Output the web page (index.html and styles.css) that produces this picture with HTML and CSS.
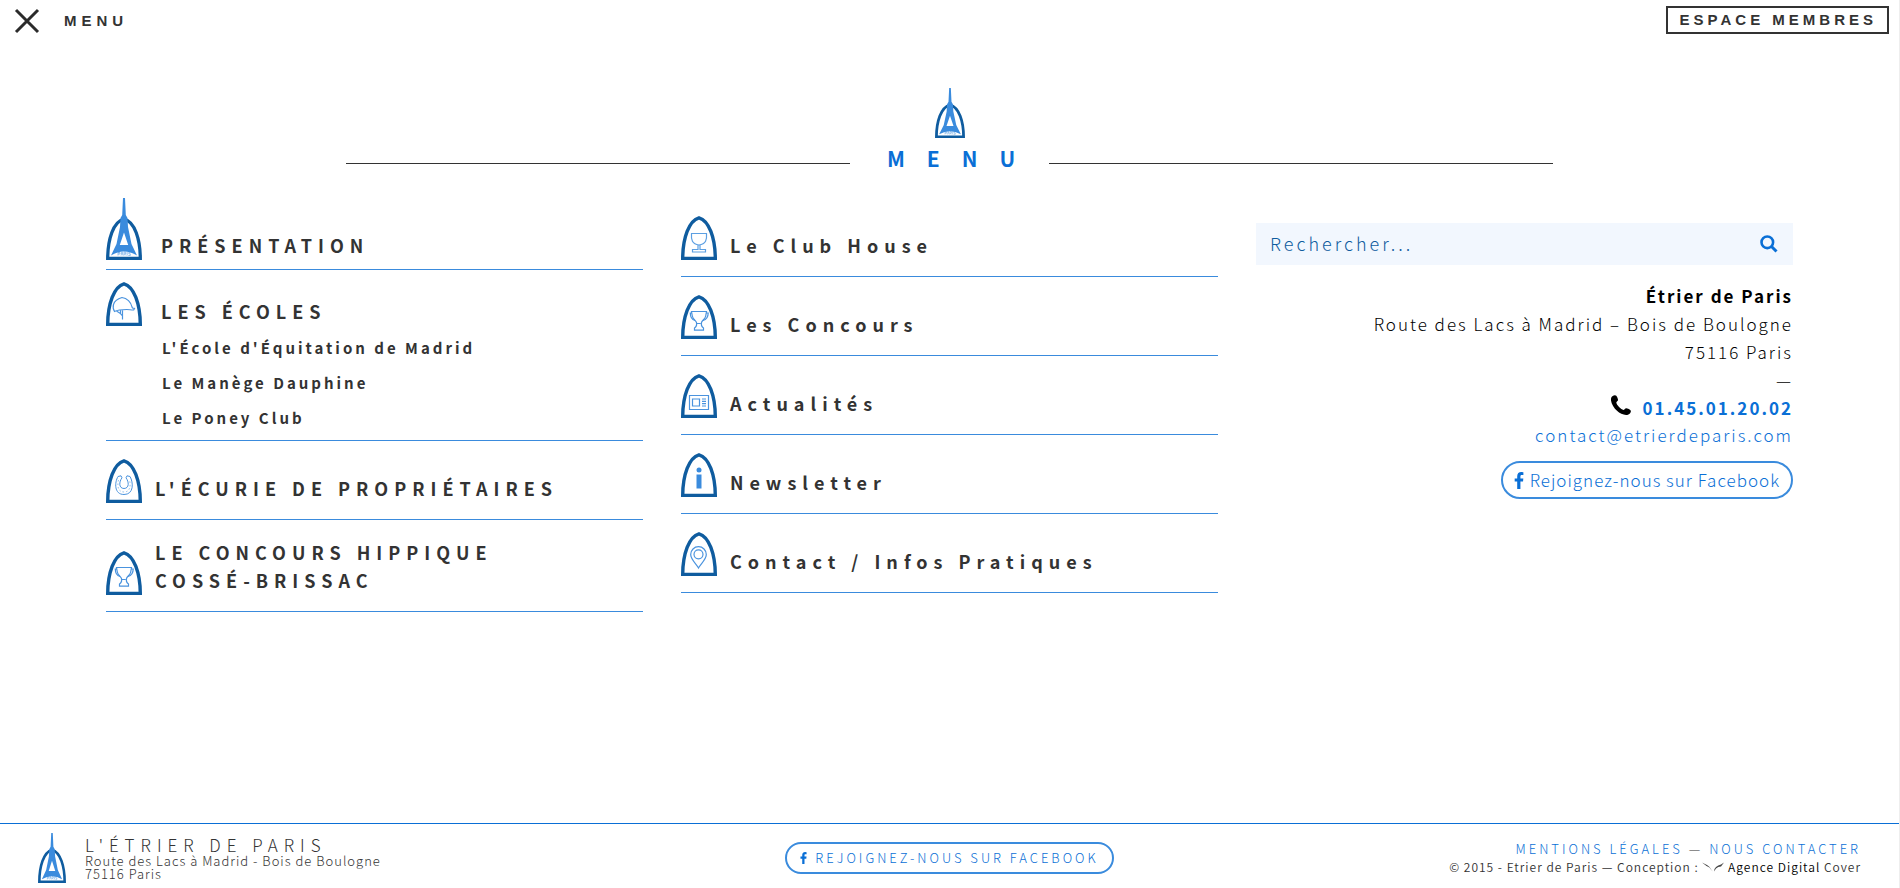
FILE: index.html
```html
<!DOCTYPE html>
<html lang="fr">
<head>
<meta charset="utf-8">
<title>L'Étrier de Paris</title>
<link rel="stylesheet" href="styles.css">
</head>
<body>
<svg class="sprite" aria-hidden="true">
  <symbol id="arch" viewBox="0 0 36 44"><path d="M1.700 42.400C1.800 22 8 4.500 18 1.800C28 4.500 34.200 22 34.300 42.400Z" fill="#fff" stroke="#0f5c9f" stroke-width="3.400"/></symbol>
  <symbol id="logo" viewBox="0 0 36 62" preserveAspectRatio="none">
    <path d="M1.700 60.400C1.800 42 7 23.500 18 21C29 23.500 34.200 42 34.300 60.400Z" fill="#fff" stroke="#0f5c9f" stroke-width="3.300"/>
    <path fill="#3a8bdd" fill-rule="evenodd" d="M17 0h2l.8 17 1.700 3 .5 9 3.500 17L31 57.500Q18 49.500 5 57.500L10.500 46l3.500-17 .5-9 1.700-3zM18 34.500l-4.200 12.500h8.400z"/>
    <path d="M12 54v3.500M12 54.500h2v1.500h-2M15 57.500l1-3.500 1 3.500M18 57.500V54h1.500l.5 1.500-1.500.3 1.500 1.700M21.200 54v3.500M24.500 54.300h-1.700v1.500h1.500v1.700h-2" fill="none" stroke="#3a8bdd" stroke-width=".5"/>
  </symbol>
  <symbol id="cup" viewBox="0 0 36 44"><g fill="none" stroke="#4a93de" stroke-width="1.200"><path d="M10.500 16.500h15l-.8 4.500c-.5 3-3.700 4.500-4.200 6.500-.3 2 .3 4.500 2 5.500v2.200h-9V33c1.700-1 2.300-3.500 2-5.500-.7-2-3.700-3.500-4.200-6.500z"/><path d="M11 18H9.300c0 4 1.500 6.500 4.700 7.500M25 18h2.200c0 4-2 6.500-5.200 7.500M15.800 28.500h4"/></g></symbol>
  <symbol id="fb" viewBox="0 0 10 18"><path d="M9.800.2v3H8C6.700 3.200 6.500 3.800 6.500 4.800v2h3.200l-.4 3.200H6.500v8H3.100v-8H.3V6.800h2.800V4.400C3.100 1.600 4.800 0 7.400 0z" fill="#0a6fd6"/></symbol>
</svg>

<header class="topbar">
  <button class="menu-toggle" type="button">
    <svg class="close" viewBox="0 0 26 26" aria-hidden="true"><path d="M2 2l22 22M24 2L2 24" stroke="#2b2b2b" stroke-width="3"/></svg>
    <span>MENU</span>
  </button>
  <a class="members" href="#">ESPACE MEMBRES</a>
</header>

<main class="main">
  <div class="heading">
    <svg class="heading-logo" viewBox="0 0 36 62" preserveAspectRatio="none" aria-hidden="true"><use href="#logo"/></svg>
    <div class="heading-row"><h1>MENU</h1></div>
  </div>

  <div class="columns">
    <nav class="list">
      <div class="item first">
        <a class="entry wide" href="#"><svg class="logo" viewBox="0 0 36 62" aria-hidden="true"><use href="#logo"/></svg><span>PRÉSENTATION</span></a>
      </div>
      <div class="item schools">
        <a class="entry wide" href="#"><svg class="icon" viewBox="0 0 36 44" aria-hidden="true"><use href="#arch"/><path d="M8.500 29.500c-1-1.500-1.800-4-1-7 1-4 5-6 8.500-7 5 .5 9 4.500 10 9.500l.5 1 2 .5-.8 1.500c-3 0-4.500-.5-7-.5-5 0-8.500 0-12.200 2zM10.500 29c2 1 4 2.500 6 5M16.500 28v9.500M14.500 28.500v3" fill="none" stroke="#4a93de" stroke-width="1.200"/></svg><span>LES ÉCOLES</span></a>
        <ul class="sub">
          <li><a href="#">L'École d'Équitation de Madrid</a></li>
          <li><a href="#">Le Manège Dauphine</a></li>
          <li><a href="#">Le Poney Club</a></li>
        </ul>
      </div>
      <div class="item">
        <a class="entry" href="#"><svg class="icon" viewBox="0 0 36 44" aria-hidden="true"><use href="#arch"/><g fill="none" stroke="#4a93de"><path d="M12 17.500l3-.7 1 2c-3 4-3.500 10.500 2 10.700 5.500-.2 5-6.700 2-10.700l1-2 3 .7c3.500 6 4 18-6 18s-9.500-12-6-18z"/><path d="M12.500 21c-1.500 6-.5 12 5.500 12s7-6 5.500-12" stroke-width=".6" stroke-dasharray="1.500 2"/></g></svg><span>L'ÉCURIE DE PROPRIÉTAIRES</span></a>
      </div>
      <div class="item">
        <a class="entry" href="#"><svg class="icon" viewBox="0 0 36 44" aria-hidden="true"><use href="#arch"/><use href="#cup"/></svg><span>LE CONCOURS HIPPIQUE<br>COSSÉ-BRISSAC</span></a>
      </div>
    </nav>

    <nav class="list">
      <div class="item"><a class="entry" href="#"><svg class="icon" viewBox="0 0 36 44" aria-hidden="true"><use href="#arch"/><path d="M10.500 17.500h15c.5 6-.5 11-7.500 11.500-7-.5-8-5.500-7.500-11.500zM17 29v4.500h-5.500V36h13v-2.500H19V29" fill="none" stroke="#5c9fe2" stroke-width="1.200"/></svg><span>Le Club House</span></a></div>
      <div class="item"><a class="entry" href="#"><svg class="icon" viewBox="0 0 36 44" aria-hidden="true"><use href="#arch"/><use href="#cup"/></svg><span>Les Concours</span></a></div>
      <div class="item"><a class="entry" href="#"><svg class="icon" viewBox="0 0 36 44" aria-hidden="true"><use href="#arch"/><path d="M8.500 21.500h19v14h-19zM11.500 25h7v7h-7zM21 25h4M21 27.300h4M21 29.700h4M21 32h4" fill="none" stroke="#4a93de" stroke-width="1.200"/></svg><span>Actualités</span></a></div>
      <div class="item"><a class="entry" href="#"><svg class="icon" viewBox="0 0 36 44" aria-hidden="true"><use href="#arch"/><circle cx="18" cy="17" r="2.500" fill="#3a8bdd"/><path d="M15.500 21.500h5v14h-5z" fill="#3a8bdd"/></svg><span>Newsletter</span></a></div>
      <div class="item"><a class="entry" href="#"><svg class="icon" viewBox="0 0 36 44" aria-hidden="true"><use href="#arch"/><g fill="none" stroke="#4a93de" stroke-width="1.200"><path d="M17.500 36c-2-4-7.800-8.500-7.800-13.500a7.800 7.800 0 0 1 15.600 0c0 5-5.800 9.500-7.800 13.500z"/><circle cx="17.500" cy="22.300" r="4.500"/></g></svg><span>Contact / Infos Pratiques</span></a></div>
    </nav>

    <section class="aside">
      <form class="search">
        <input type="text" placeholder="Rechercher..." aria-label="Rechercher">
        <button type="button" aria-label="Lancer la recherche"><svg viewBox="0 0 18 18" aria-hidden="true"><circle cx="7.300" cy="7.300" r="5.800" fill="none" stroke="#0a6fd6" stroke-width="2.600"/><path d="M11.500 11.500l5 5" stroke="#0a6fd6" stroke-width="3"/></svg></button>
      </form>
      <address class="address">
        <strong>Étrier de Paris</strong>
        <span>Route des Lacs à Madrid – Bois de Boulogne</span>
        <span>75116 Paris</span>
        <span>—</span>
        <span class="phone"><svg viewBox="0 0 20 20" aria-hidden="true"><path d="M1 1.500C3 0 4.500-.2 5.300.8c1 1.400 1.500 2.800 1.700 4 .1 1-1.600 1.800-1.700 2.700C5.600 10 10 14.400 12.500 14.900c1 0 1.700-1.800 2.700-1.700 1.200.2 2.800.9 4 1.700 1.200.8.600 2.600-.6 3.800-3 2.800-9 .5-12.600-2.900C2 12-2 5 1 1.500z"/></svg><a href="#">01.45.01.20.02</a></span>
        <a class="mail" href="#">contact@etrierdeparis.com</a>
      </address>
      <a class="pill" href="#"><svg viewBox="0 0 10 18" aria-hidden="true"><use href="#fb"/></svg>Rejoignez-nous sur Facebook</a>
    </section>
  </div>
</main>

<footer class="footer">
  <div class="brand">
    <svg viewBox="0 0 36 62" preserveAspectRatio="none" aria-hidden="true"><use href="#logo"/></svg>
    <div><p class="brand-name">L'ÉTRIER DE PARIS</p><p>Route des Lacs à Madrid - Bois de Boulogne</p><p>75116 Paris</p></div>
  </div>
  <a class="pill small" href="#"><svg viewBox="0 0 10 18" aria-hidden="true"><use href="#fb"/></svg>REJOIGNEZ-NOUS SUR FACEBOOK</a>
  <div class="legal">
    <p class="links"><a href="#">MENTIONS LÉGALES</a> — <a href="#">NOUS CONTACTER</a></p>
    <p class="credit">© 2015 - Etrier de Paris — Conception : <svg viewBox="0 0 22 10" aria-hidden="true"><path d="M0 .5l5 2.500q3.500 2 4.500 5l1.500 1.500q-2-1.500-3.500-4Q4 4 0 .5zM22 .5l-3 4q-3 0-5 2l-2 3q0-3 2-4.500 2-2 5-2.500z" fill="#444"/></svg> <a href="#">Agence Digital</a> Cover</p>
  </div>
</footer>
</body>
</html>
```
FILE: styles.css
```css
* { box-sizing: border-box; }

body {
  margin: 0;
  min-height: 100vh;
  display: flex;
  flex-direction: column;
  border-right: 1px solid #eee;
  background: #fff;
  color: #333;
  font-family: "Noto Sans CJK SC", "Noto Sans", sans-serif;
}

a { color: inherit; text-decoration: none; }
p, ul, h1 { margin: 0; padding: 0; }
ul { list-style: none; }
svg { flex: none; display: block; }
.sprite { position: absolute; width: 0; height: 0; }

.topbar {
  display: flex;
  justify-content: space-between;
  align-items: flex-start;
  padding: 6px 10px 0 14px;
  font: bold 15px/24px "Liberation Sans", Arial, sans-serif;
}
.menu-toggle {
  display: flex;
  align-items: center;
  gap: 24px;
  padding: 2px 0;
  border: 0;
  background: none;
  color: #333;
  font: inherit;
  letter-spacing: 5px;
}
.close { width: 26px; height: 26px; }
.members {
  padding: 0 10px 0 12px;
  border: 2px solid #333;
  letter-spacing: 4px;
}

.main { flex: 1; padding: 52px 106px 0; }
.heading { display: flex; flex-direction: column; align-items: center; }
.heading-logo { width: 30px; height: 50px; }
.heading-row {
  display: flex;
  align-items: center;
  gap: 12px;
  width: 1207px;
  max-width: 100%;
  color: #0a6fd6;
}
.heading-row::before, .heading-row::after {
  content: "";
  flex: 1;
  margin-top: 10px;
  border-top: 1px solid #333;
}
h1 { padding-left: 25px; font-size: 21px; line-height: 40px; letter-spacing: 22px; }

.columns {
  display: grid;
  grid-template-columns: repeat(3, 1fr);
  gap: 38px;
  margin-top: 20px;
}
.item { padding: 18px 0 16px; border-bottom: 1px solid #3a8bdd; }
.item.first { padding: 0 0 9px; }
.item.schools { padding: 12px 0 5px; }
.entry {
  display: flex;
  align-items: flex-end;
  gap: 13px;
  font-size: 18px;
  font-weight: bold;
  line-height: 28px;
  letter-spacing: 6px;
}
.entry.wide { gap: 19px; }
.entry span { padding-bottom: 1px; }
.icon { width: 36px; height: 44px; }
.logo { width: 36px; height: 62px; }
.sub {
  padding: 4px 0 0 56px;
  font-size: 15px;
  font-weight: bold;
  line-height: 35px;
  letter-spacing: 3px;
}

.aside {
  display: flex;
  flex-direction: column;
  align-items: flex-end;
  padding-top: 25px;
  color: #000;
}
.search {
  display: flex;
  align-items: center;
  width: 100%;
  height: 42px;
  padding: 0 15px 0 14px;
  background: #f2f7fe;
}
.search input {
  flex: 1;
  min-width: 0;
  padding: 0 0 2px;
  border: 0;
  background: none;
  color: #0f5c9f;
  font: 300 18px/28px "Noto Sans CJK SC", sans-serif;
  letter-spacing: 3px;
}
.search input::placeholder { color: #0f5c9f; opacity: 1; }
.search button { padding: 0; border: 0; background: none; }
.search svg { width: 18px; height: 18px; }
.address {
  display: flex;
  flex-direction: column;
  align-items: flex-end;
  margin-top: 17px;
  font-size: 17px;
  font-style: normal;
  font-weight: 300;
  line-height: 28px;
  letter-spacing: 2px;
}
.address strong { font-weight: bold; }
.phone { display: flex; gap: 12px; color: #0a6fd6; font-weight: bold; }
.phone svg { width: 20px; height: 20px; margin-top: 1px; fill: #000; }
.mail { color: #0a6fd6; line-height: 26px; }

.pill {
  display: flex;
  align-items: center;
  gap: 6px;
  margin-top: 13px;
  padding: 0 11px;
  border: 2px solid #3a8bdd;
  border-radius: 19px;
  color: #0a6fd6;
  font-size: 17px;
  font-weight: 300;
  line-height: 34px;
  letter-spacing: 1px;
}
.pill svg { width: 10px; height: 17px; }
.pill.small {
  gap: 8px;
  margin: 0;
  padding: 0 13px;
  font-size: 13px;
  line-height: 28px;
  letter-spacing: 3px;
}
.pill.small svg { width: 7px; height: 12px; }

.footer {
  display: grid;
  grid-template-columns: 1fr auto 1fr;
  align-items: center;
  min-height: 65px;
  padding: 4px 38px 0;
  border-top: 1px solid #0a6fd6;
  font-size: 13px;
  font-weight: 300;
  line-height: 13px;
}
.brand { display: flex; align-items: center; gap: 19px; letter-spacing: 1px; }
.brand svg { width: 28px; height: 50px; }
.brand-name { font-size: 17px; line-height: 18px; letter-spacing: 6px; }
.legal { text-align: right; line-height: 18px; letter-spacing: 1px; }
.links { letter-spacing: 3px; }
.links a { color: #0a6fd6; }
.credit { font-size: 12px; font-weight: 350; }
.credit svg { display: inline-block; width: 22px; height: 10px; }
.credit a { color: #000; }
```
